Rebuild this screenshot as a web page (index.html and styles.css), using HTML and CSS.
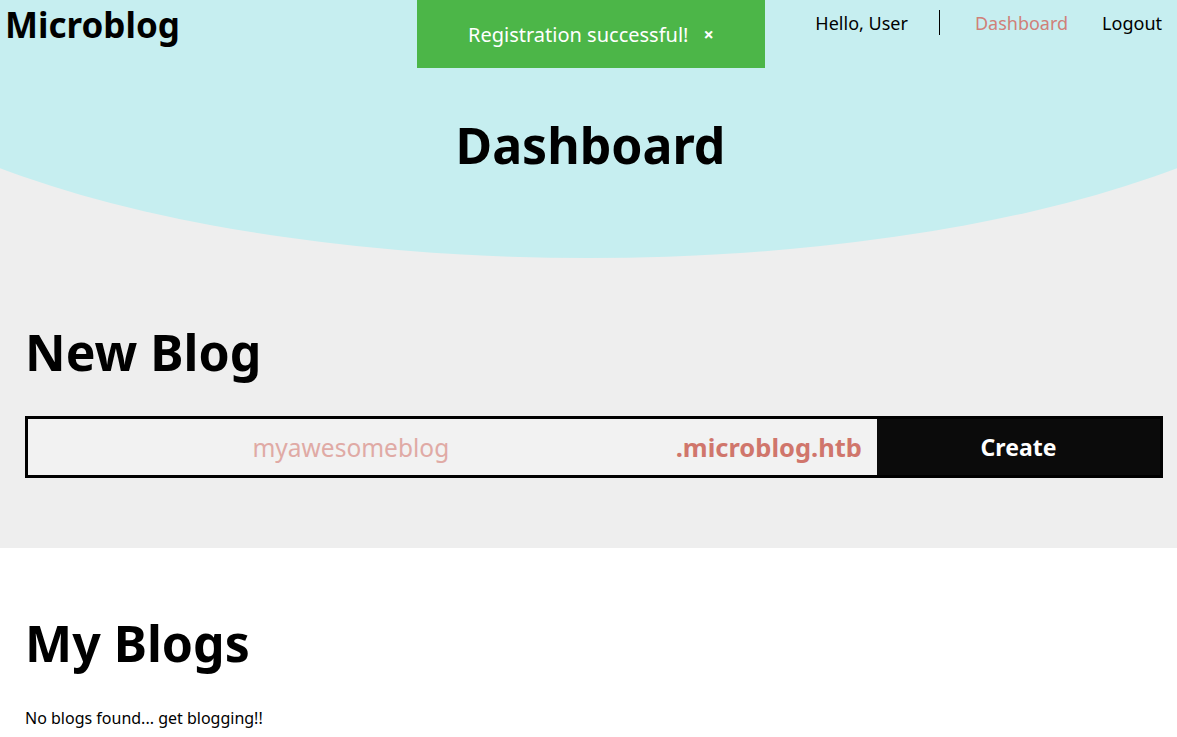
FILE: index.html
```html
<html>

<head>
    <link rel="stylesheet" href="styles.css">
    <title>Dashboard - Microblog</title>
</head>

<body>
    <div class="toast">
        <span>Registration successful!</span>
        <span class="toast-close">&times;</span>
    </div>

    <div class="top">
        <div class="hero">
            <div class="nav">
                <h1 class="logo">Microblog</h1>
                <ul class="links">
                    <li>Hello, User</li>
                    <li class="divider"></li>
                    <li><a class="active" href="#">Dashboard</a></li>
                    <li><a href="#">Logout</a></li>
                </ul>
            </div>
            <h1 class="title">Dashboard</h1>
        </div>

        <div class="section">
            <h2>New Blog</h2>
            <form class="new-blog">
                <input name="subdomain" placeholder="myawesomeblog" />
                <span class="suffix">.microblog.htb</span>
                <button type="submit">Create</button>
            </form>
        </div>
    </div>

    <div class="section mine">
        <h2>My Blogs</h2>
        <p class="empty">No blogs found... get blogging!!</p>
    </div>
</body>

</html>
```

FILE: styles.css
```css
body {
    margin: 0;
    font-family: "Noto Sans", sans-serif;
    background: white;
    color: black;
}

.toast {
    position: fixed;
    z-index: 10;
    top: 0;
    left: 417px;
    width: 348px;
    height: 68px;
    box-sizing: border-box;
    padding: 0 51px;
    background: #4cb648;
    color: white;
    font-size: 20px;
    display: flex;
    align-items: center;
    gap: 15px;
}

.toast-close {
    font-weight: bold;
    font-size: 18px;
}

.top {
    background: #eeeeee;
    padding-bottom: 70px;
}

.hero {
    height: 258px;
    background: #c6eef0;
    clip-path: ellipse(800px 278px at 50% -20px);
}

.nav {
    display: flex;
    justify-content: space-between;
    align-items: flex-start;
}

.logo {
    margin: 0;
    padding: 1px 4px 0 5px;
    font-size: 35px;
}

.links {
    list-style: none;
    margin: 0;
    padding: 10px 15px 0 0;
    display: flex;
    align-items: center;
    gap: 34px;
    font-size: 18px;
}

.links a {
    color: black;
    text-decoration: none;
}

.links a.active {
    color: #d08078;
}

.divider {
    width: 1px;
    height: 25px;
    background: black;
    margin: 0 1px 0 -3px;
}

.title {
    margin: 63px 0 0;
    padding-left: 4px;
    font-size: 50px;
    text-align: center;
}

.section {
    padding: 0 14px 0 25px;
}

.section h2 {
    margin: 0;
    padding-top: 60px;
    font-size: 50px;
}

.new-blog {
    margin: 30px 0 0;
    display: flex;
    border: solid 3px black;
    height: 62px;
    box-sizing: border-box;
    background: #f2f2f2;
}

.new-blog input {
    flex: 1;
    min-width: 0;
    border: none;
    background: #f2f2f2;
    font-family: "Noto Sans", sans-serif;
    font-size: 24.5px;
    text-align: center;
    color: #d0766c;
}

.new-blog input::placeholder {
    color: #e0aaa5;
}

.suffix {
    display: flex;
    align-items: center;
    padding: 0 15px 0 2px;
    font-size: 25.5px;
    font-weight: bold;
    color: #d0766c;
}

.new-blog button {
    flex: 0 0 25%;
    border: none;
    background: #0b0b0b;
    color: white;
    font-family: "Noto Sans", sans-serif;
    font-size: 23px;
    font-weight: bold;
}

.mine h2 {
    padding-top: 61px;
}

.empty {
    margin: 30px 0 0;
    font-size: 16px;
}
```
